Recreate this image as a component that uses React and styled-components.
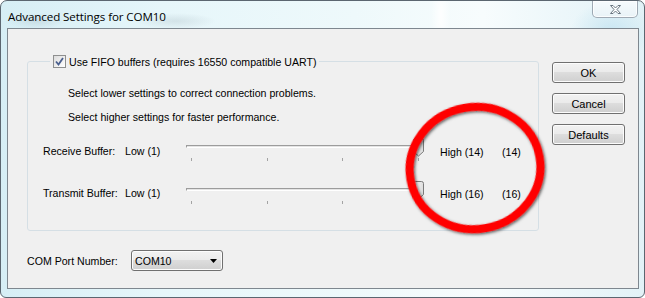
import React from 'react';
import styled, { createGlobalStyle } from 'styled-components';

const Global = createGlobalStyle`
  html, body { margin: 0; padding: 0; background: #ffffff; }
  body { width: 645px; height: 298px; overflow: hidden; }
  #root { width: 645px; height: 298px; }
`;

const FONT = `"Liberation Sans", Arial, sans-serif`;
const SIZE = '10.6px';

const Window = styled.div`
  position: relative;
  box-sizing: border-box;
  width: 645px;
  height: 298px;
  border: 1px solid #5b6670;
  border-radius: 7px 7px 6px 6px;
  overflow: hidden;
  display: flex;
  flex-direction: column;
  background:
    radial-gradient(ellipse 30px 8px at 36px 20px, rgba(120,140,150,0.18), transparent),
    radial-gradient(ellipse 40px 8px at 175px 20px, rgba(120,140,150,0.18), transparent),
    radial-gradient(ellipse 10px 40px at 440px 14px, rgba(255,255,255,0.9), transparent),
    radial-gradient(ellipse 40px 30px at 610px 30px, rgba(190,225,240,0.7), transparent),
    linear-gradient(to right, #d6eef5 0%, #e6f6fa 25%, #eef9fb 55%, #f7fcfd 75%, #e2f2f7 100%);
`;

const TitleBar = styled.div`
  height: 27px;
  flex: none;
  display: flex;
  align-items: flex-start;
  justify-content: space-between;
  padding-left: 7px;
`;

const Title = styled.div`
  font-family: "Open Sans", "Noto Sans", sans-serif;
  font-size: 11.6px;
  line-height: 16px;
  color: #000;
  margin-top: 8px;
  letter-spacing: -0.1px;
`;

const CloseButton = styled.div`
  width: 46px;
  height: 17px;
  box-sizing: border-box;
  margin-right: 6px;
  border: 1px solid rgba(90, 105, 120, 0.55);
  border-top: none;
  border-radius: 0 0 5px 5px;
  background: linear-gradient(#f6fbfd, #e9f3f7);
  box-shadow: inset 0 0 0 1px rgba(255,255,255,0.8);
  display: flex;
  align-items: center;
  justify-content: center;
`;

const Client = styled.div`
  box-sizing: border-box;
  margin-left: 6px;
  width: 632px;
  height: 261px;
  border: 1px solid #7e878f;
  background: #f0f0f0;
  display: flex;
  flex-direction: column;
`;

const MainRow = styled.div`
  display: flex;
  align-items: flex-start;
  padding-top: 32px;
`;

const Group = styled.div`
  position: relative;
  box-sizing: border-box;
  width: 512px;
  height: 170px;
  margin-left: 19px;
  border: 1px solid #d5dfe5;
  border-radius: 3px;
  padding: 24px 0 0 15px;
  display: flex;
  flex-direction: column;
`;

const Legend = styled.div`
  position: absolute;
  left: 22px;
  top: -7px;
  padding: 0 3px;
  background: #f0f0f0;
  display: flex;
  align-items: center;
  gap: 3px;
  height: 13px;
`;

const Box = styled.span`
  display: inline-flex;
  width: 13px;
  height: 13px;
  box-sizing: border-box;
  border: 1px solid #8e8f8f;
  background: linear-gradient(135deg, #dcdcdc, #ffffff);
  align-items: center;
  justify-content: center;
`;

const Text = styled.span`
  font-family: ${FONT};
  font-size: ${SIZE};
  line-height: 14px;
  color: #000;
  white-space: nowrap;
`;

const Note = styled.div`
  font-family: ${FONT};
  font-size: ${SIZE};
  line-height: 14px;
  color: #000;
  margin-left: 25px;
  margin-top: ${p => p.$gap || 0}px;
  white-space: nowrap;
`;

const SliderRow = styled.div`
  display: grid;
  grid-template-columns: 82px 61px 254px 62px auto;
  align-items: start;
  margin-top: ${p => p.$gap}px;
`;

const Cell = styled.div`
  font-family: ${FONT};
  font-size: ${SIZE};
  line-height: 14px;
  color: #000;
  white-space: nowrap;
  padding-top: ${p => p.$top}px;
`;

const SliderBox = styled.div`
  position: relative;
  width: 238px;
  height: 24px;
  padding-top: 8px;
  box-sizing: border-box;
`;

const Track = styled.div`
  box-sizing: border-box;
  height: 3px;
  border-top: 1px solid #9c9c9c;
  border-left: 1px solid #9c9c9c;
  border-bottom: 1px solid #ffffff;
  background: #e4e4e4;
`;

const Ticks = styled.div`
  display: flex;
  justify-content: space-between;
  padding: 0 5px;
  margin-top: 10px;
`;

const Tick = styled.span`
  width: 1px;
  height: 3px;
  background: #a3a3a3;
`;

const Thumb = styled.svg`
  position: absolute;
  left: 227px;
  top: 1px;
`;

const ButtonCol = styled.div`
  display: flex;
  flex-direction: column;
  gap: 10px;
  margin-left: 13px;
  padding-top: 1px;
`;

const Button = styled.div`
  box-sizing: border-box;
  width: 73px;
  height: 21px;
  border: 1px solid #707070;
  border-radius: 3px;
  background: linear-gradient(#f2f2f2 0%, #ebebeb 45%, #dddddd 50%, #cfcfcf 100%);
  box-shadow: inset 0 0 0 1px #fcfcfc;
  display: flex;
  align-items: center;
  justify-content: center;
  font-family: ${FONT};
  font-size: 11px;
  color: #000;
`;

const BottomRow = styled.div`
  display: flex;
  align-items: center;
  margin-top: 19px;
  padding-left: 19px;
`;

const Label = styled.span`
  width: 104px;
  font-family: ${FONT};
  font-size: ${SIZE};
  line-height: 14px;
  color: #000;
`;

const Combo = styled.div`
  box-sizing: border-box;
  width: 92px;
  height: 21px;
  border: 1px solid #707070;
  border-radius: 3px;
  background: linear-gradient(#f2f2f2 0%, #ebebeb 45%, #dddddd 50%, #cfcfcf 100%);
  box-shadow: inset 0 0 0 1px #fcfcfc;
  display: flex;
  align-items: center;
  justify-content: space-between;
  padding: 0 5px 0 3px;
  font-family: ${FONT};
  font-size: ${SIZE};
  color: #000;
`;

const Overlay = styled.svg`
  position: absolute;
  left: 0;
  top: 0;
  pointer-events: none;
`;

const ThumbIcon = () => (
  <Thumb width="11" height="19" viewBox="0 0 11 19">
    <defs>
      <linearGradient id="tg" x1="0" y1="0" x2="1" y2="0">
        <stop offset="0" stopColor="#ffffff" />
        <stop offset="1" stopColor="#dcdcdc" />
      </linearGradient>
    </defs>
    <path d="M0.5 2.5 Q0.5 0.5 2.5 0.5 H8.5 Q10.5 0.5 10.5 2.5 V13.5 L5.5 18 L0.5 13.5 Z" fill="url(#tg)" stroke="#7b7b7b" />
  </Thumb>
);

const Slider = () => (
  <SliderBox>
    <Track />
    <Ticks>
      <Tick /><Tick /><Tick /><Tick />
    </Ticks>
    <ThumbIcon />
  </SliderBox>
);

export default function App() {
  return (
    <>
      <Global />
      <Window>
        <TitleBar>
          <Title>Advanced Settings for COM10</Title>
          <CloseButton>
            <svg width="11" height="9" viewBox="0 0 11 9">
              <path d="M0.5 0.5 H3 L5.5 3 L8 0.5 H10.5 L7 4.5 L10.5 8.5 H8 L5.5 6 L3 8.5 H0.5 L4 4.5 Z" fill="#ffffff" stroke="#6a7680" strokeWidth="1" strokeLinejoin="round" />
            </svg>
          </CloseButton>
        </TitleBar>
        <Client>
          <MainRow>
            <Group>
              <Legend>
                <Box>
                  <svg width="9" height="9" viewBox="0 0 9 9">
                    <path d="M1 4.5 L3.5 7.5 L8 1" fill="none" stroke="#4a5f8e" strokeWidth="1.8" />
                  </svg>
                </Box>
                <Text>Use FIFO buffers (requires 16550 compatible UART)</Text>
              </Legend>
              <Note>Select lower settings to correct connection problems.</Note>
              <Note $gap={10}>Select higher settings for faster performance.</Note>
              <SliderRow $gap={13}>
                <Cell $top={7}>Receive Buffer:</Cell>
                <Cell $top={7}>Low (1)</Cell>
                <Slider />
                <Cell $top={8}>High (14)</Cell>
                <Cell $top={8}>(14)</Cell>
              </SliderRow>
              <SliderRow $gap={19}>
                <Cell $top={6}>Transmit Buffer:</Cell>
                <Cell $top={6}>Low (1)</Cell>
                <Slider />
                <Cell $top={7}>High (16)</Cell>
                <Cell $top={7}>(16)</Cell>
              </SliderRow>
            </Group>
            <ButtonCol>
              <Button>OK</Button>
              <Button>Cancel</Button>
              <Button>Defaults</Button>
            </ButtonCol>
          </MainRow>
          <BottomRow>
            <Label>COM Port Number:</Label>
            <Combo>
              <span>COM10</span>
              <svg width="7" height="4" viewBox="0 0 7 4"><path d="M0 0 H7 L3.5 4 Z" fill="#000" /></svg>
            </Combo>
          </BottomRow>
        </Client>
        <Overlay width="645" height="298" viewBox="0 0 645 298">
          <defs>
            <filter id="sh" x="-20%" y="-20%" width="140%" height="140%">
              <feDropShadow dx="1" dy="1.5" stdDeviation="1.6" floodColor="#000" floodOpacity="0.65" />
            </filter>
          </defs>
          <ellipse cx="474" cy="167" rx="65.5" ry="61" fill="none" stroke="#ff0000" strokeWidth="8" transform="rotate(-10 474 167)" filter="url(#sh)" />
        </Overlay>
      </Window>
    </>
  );
}
